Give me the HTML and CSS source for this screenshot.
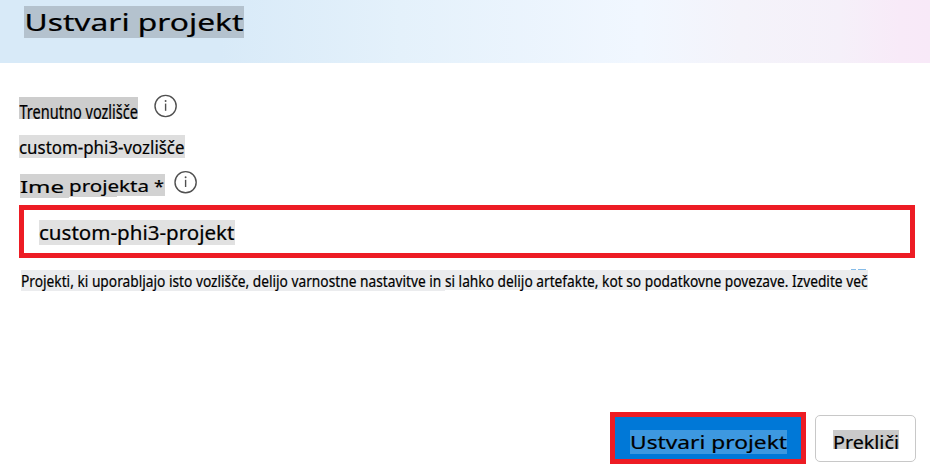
FILE: index.html
```
<!DOCTYPE html>
<html lang="sl">
<head>
<meta charset="utf-8">
<title>Ustvari projekt</title>
<link rel="stylesheet" href="styles.css">
</head>
<body>
<main class="dialog">
  <header class="header">
    <svg class="label" width="220" height="32"><rect class="title-bg" width="220" height="32"/><text class="title-text" x="0.5" y="25" textLength="219" lengthAdjust="spacingAndGlyphs">Ustvari projekt</text></svg>
  </header>
  <section class="form">
    <div class="row hub-row">
      <svg class="label" width="119" height="22"><rect class="hub-bg" width="119" height="22"/><text class="hub-text" x="0.5" y="21.6" textLength="118.5" lengthAdjust="spacingAndGlyphs">Trenutno vozlišče</text></svg>
      <svg class="info" width="24" height="24" viewBox="0 0 24 24"><circle cx="12.6" cy="12" r="10.6"/><path d="M12.6 9.6v7.2"/><circle class="dot" cx="12.6" cy="7" r=".95"/></svg>
    </div>
    <svg class="label hub-value" width="166" height="23"><rect class="value-bg" width="166" height="23"/><text class="value-text" x="0" y="18.5" textLength="165.5" lengthAdjust="spacingAndGlyphs">custom-phi3-vozlišče</text></svg>
    <div class="row name-row">
      <svg class="label" width="145" height="24"><path class="name-bg" d="M0 0H145V22H97V23H49V24H0Z"/><text class="name-text" y="19"><tspan x="0" textLength="44" lengthAdjust="spacingAndGlyphs">Ime</tspan> <tspan x="49" y="18" textLength="80" lengthAdjust="spacingAndGlyphs">projekta</tspan> <tspan x="134" y="18" textLength="10" lengthAdjust="spacingAndGlyphs">*</tspan></text></svg>
      <svg class="info" width="24" height="24" viewBox="0 0 24 24"><circle cx="12.6" cy="12.2" r="10.6"/><path d="M12.6 9.8v7.2"/><circle class="dot" cx="12.6" cy="7.2" r=".95"/></svg>
    </div>
    <div class="field">
      <svg class="label" width="196" height="25"><rect class="field-bg" width="196" height="25"/><text class="field-text" x="0" y="20" textLength="195.5" lengthAdjust="spacingAndGlyphs">custom-phi3-projekt</text></svg>
    </div>
    <svg class="label note" width="847" height="24"><path class="note-bg" d="M0 1H847V21H424V22H0Z"/><path class="note-link" d="M830 .5h5M837 .5h8"/><text class="note-text" x="0" y="17.6" textLength="846.5" lengthAdjust="spacingAndGlyphs">Projekti, ki uporabljajo isto vozlišče, delijo varnostne nastavitve in si lahko delijo artefakte, kot so podatkovne povezave. Izvedite več</text></svg>
  </section>
  <footer class="actions">
    <button class="create"><svg class="label" width="157" height="24"><rect class="create-bg" width="157" height="24"/><text class="create-text" x="0" y="19.2" textLength="157" lengthAdjust="spacingAndGlyphs">Ustvari projekt</text></svg></button>
    <button class="cancel"><svg class="label" width="66" height="20"><rect class="cancel-bg" width="66" height="19"/><text class="cancel-text" x="0" y="18.7" textLength="66" lengthAdjust="spacingAndGlyphs">Prekliči</text></svg></button>
  </footer>
</main>
</body>
</html>
```
FILE: styles.css
```
* { box-sizing: border-box; }
body { margin: 0; background: #fff; font-family: "Noto Sans", sans-serif; overflow: hidden; }
.dialog { width: 930px; height: 466px; display: flex; flex-direction: column; }
.header {
  height: 63px;
  padding: 6px 24px;
  background: linear-gradient(90deg, #d8eaf8 0, #d8eaf8 220px, #e4f1fb 400px, #f1f7ff 640px, #f4f3fa 740px, #f5f0f9 840px, #f8eaf8 900px, #f8e9f8 930px);
}
.label { display: block; overflow: visible; flex: none; }
.label text { fill: #000; stroke: #000; stroke-width: .2px; }
.form { flex: 1; padding: 31px 15px 0 19px; }
.row { display: flex; }
.hub-row { height: 41px; gap: 15px; }
.hub-row .label { margin-top: 3px; }
.hub-value { margin-bottom: 12px; }
.name-row { height: 35px; padding-left: 1px; gap: 8px; }
.name-row .label { margin-top: 4px; }
.info { flex: none; fill: none; stroke: #505050; stroke-width: 1.4; }
.info .dot { fill: #505050; stroke: none; }
.field { height: 53px; border: 5px solid #ed1c24; padding: 10px 15px; }
.note { margin: 11px 0 0 2px; }
.title-bg { fill: #b4c2ce; }
.title-text { font-size: 22.8px; }
.hub-bg { fill: #cdcdcd; }
.hub-text { font-size: 19px; }
.value-bg { fill: #dedede; }
.value-text { font-size: 17.6px; }
.name-bg { fill: #d2d2d2; }
.name-text { font-size: 16.5px; }
.field-bg { fill: #e1e1e1; }
.field-text { font-size: 19px; }
.note-bg { fill: #ebecee; }
.note-text { font-size: 15.6px; }
.note-link { stroke: #86bce8; }
.actions { height: 54px; padding-left: 610px; display: flex; gap: 9px; }
.actions button { display: block; padding: 0; font-family: inherit; }
.create { width: 196px; height: 52px; border: 5px solid #ed1c24; background: #0078d7; }
.create .label { margin: 8px 0 0 15px; }
.create-bg { fill: #3d98e0; }
.create-text { font-size: 18.2px; }
.cancel { width: 101px; height: 47px; margin-top: 3px; border: 1px solid #c8c8c8; border-radius: 5px; background: #fff; }
.cancel .label { margin: 2px 0 0 17px; }
.cancel-bg { fill: #cacaca; }
.cancel-text { font-size: 18.2px; }
```
